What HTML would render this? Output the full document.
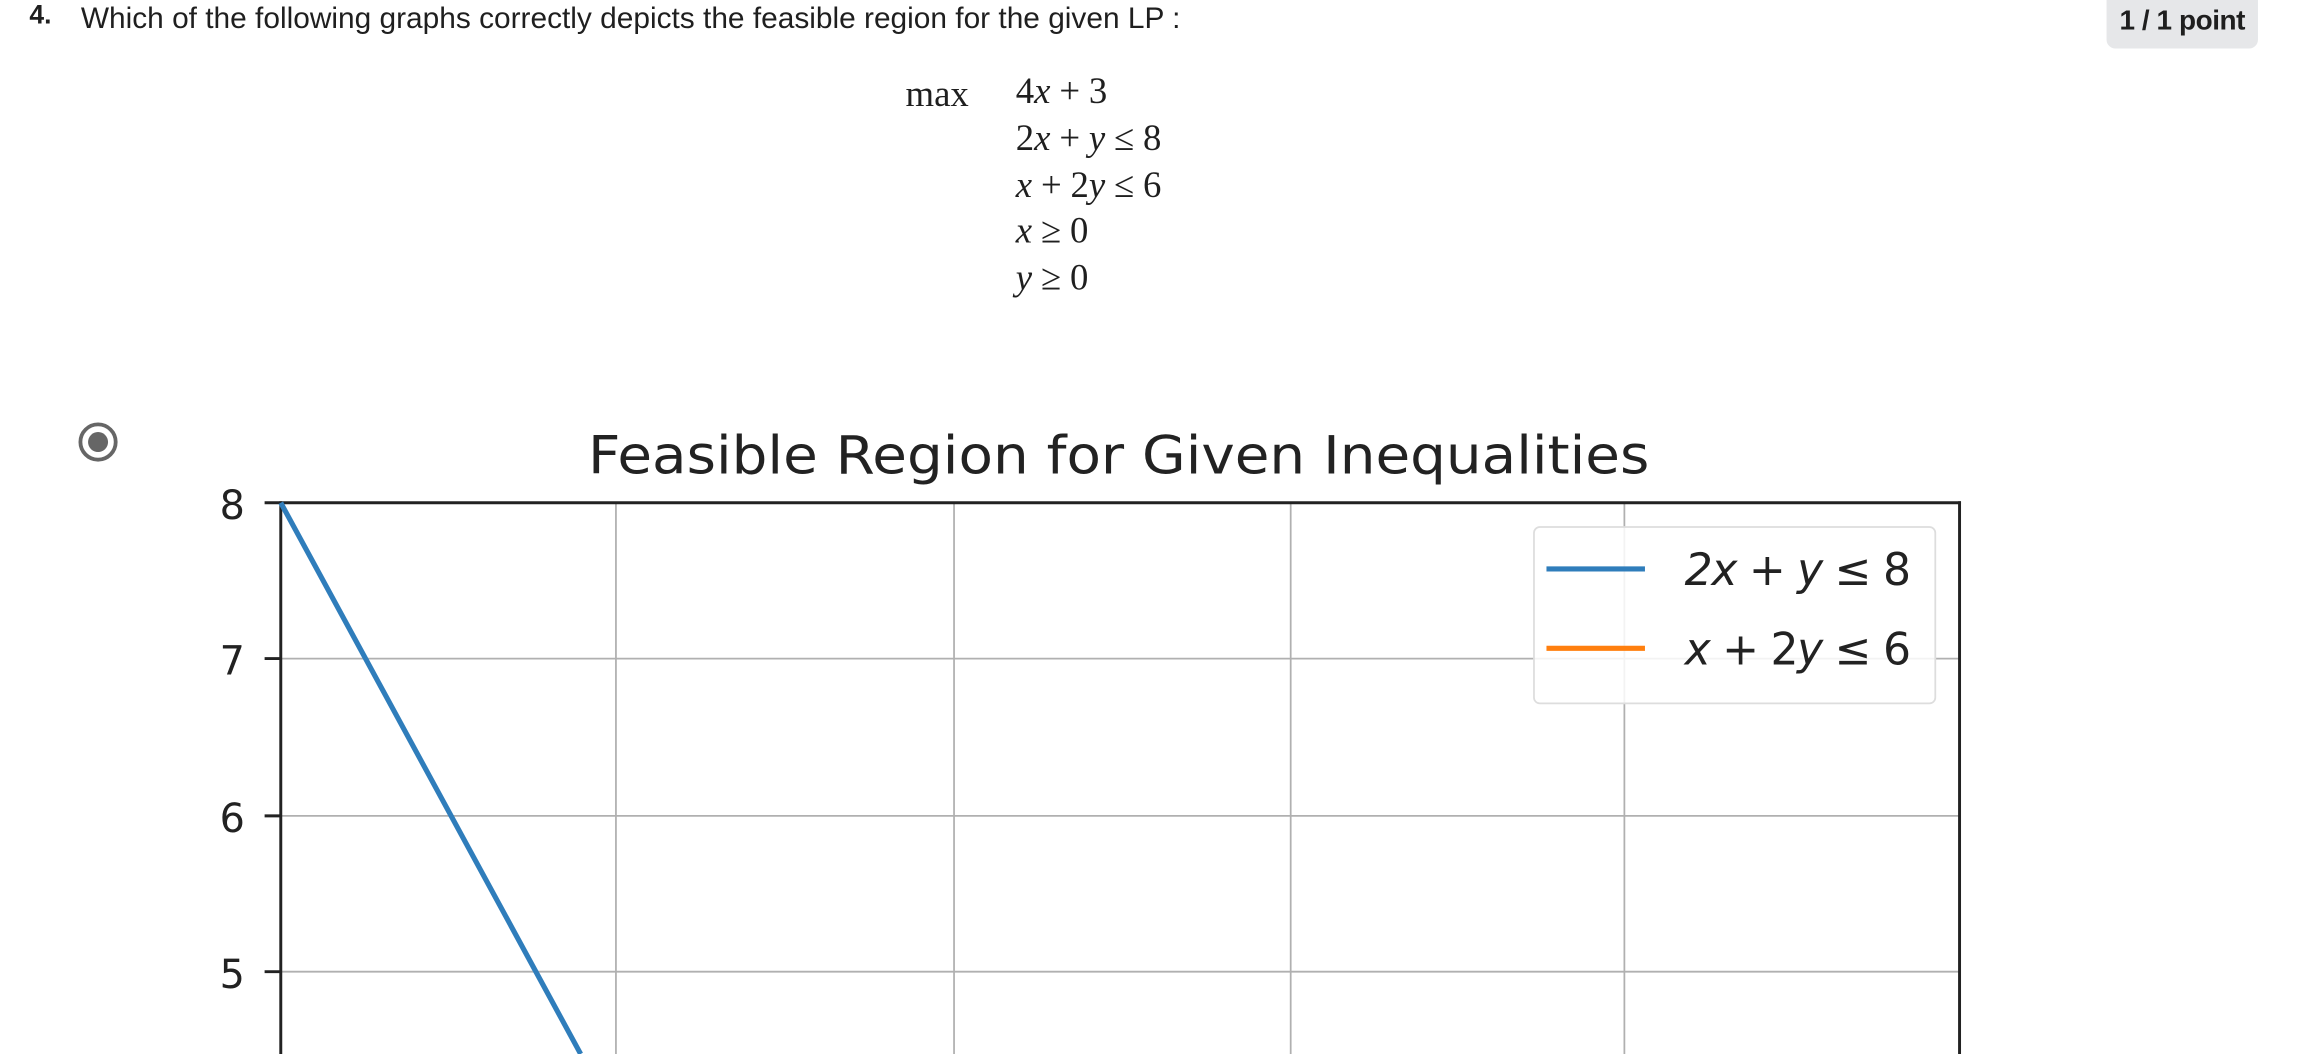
<!DOCTYPE html>
<html><head><meta charset="utf-8"><style>
html,body{margin:0;padding:0;background:#fff;overflow:hidden;width:2305px;height:1053px}
#w{position:absolute;left:0;top:0;width:1568px;height:717px;transform:scale(1.47003);transform-origin:0 0;font-family:"Liberation Sans",sans-serif;color:#1f1f1f}
.a{position:absolute;white-space:nowrap}
.m{font-family:"Liberation Serif",serif;font-size:25px;line-height:25px}
.m i{font-style:italic}
.m b{font-weight:normal;display:inline-block;margin:0 6px}
</style></head><body><div id="w">
<div class="a" style="left:20px;top:0px;font-size:18px;font-weight:bold">4.</div>
<svg class="a" style="left:0;top:0" width="900" height="30"><text x="55" y="19" font-family="Liberation Sans" font-size="20" fill="#1f1f1f" textLength="748" lengthAdjust="spacingAndGlyphs">Which of the following graphs correctly depicts the feasible region for the given LP :</text></svg>
<div class="a" style="left:1433px;top:0;width:103px;height:33px;background:#e6e7e9;border-radius:0 0 6px 6px;font-size:19px;font-weight:bold;line-height:30px;text-align:center;letter-spacing:-0.3px">1 / 1 point</div>
<div class="a m" style="left:616px;top:52px">max</div>
<div class="a m" style="left:691px;top:50px">4<i>x</i><b>+</b>3</div>
<div class="a m" style="left:691px;top:82px">2<i>x</i><b>+</b><i>y</i><b>≤</b>8</div>
<div class="a m" style="left:691px;top:114px"><i>x</i><b>+</b>2<i>y</i><b>≤</b>6</div>
<div class="a m" style="left:691px;top:145px"><i>x</i><b>≥</b>0</div>
<div class="a m" style="left:691px;top:177px"><i>y</i><b>≥</b>0</div>
<svg class="a" style="left:0;top:0" width="1568" height="717">
<circle cx="66.7" cy="300.7" r="12" fill="none" stroke="#666" stroke-width="2.6"/>
<circle cx="66.7" cy="300.7" r="6.8" fill="#666"/>
<text x="761" y="322" text-anchor="middle" font-family="DejaVu Sans" font-size="36" fill="#222" textLength="722" lengthAdjust="spacingAndGlyphs">Feasible Region for Given Inequalities</text>
<g stroke="#b0b0b0" stroke-width="1.2">
<line x1="419" y1="342" x2="419" y2="717"/><line x1="649" y1="342" x2="649" y2="717"/><line x1="878" y1="342" x2="878" y2="717"/><line x1="1105" y1="342" x2="1105" y2="717"/>
<line x1="191" y1="448" x2="1333" y2="448"/><line x1="191" y1="555" x2="1333" y2="555"/><line x1="191" y1="661" x2="1333" y2="661"/>
</g>
<g stroke="#222" stroke-width="2">
<line x1="191" y1="342" x2="1334" y2="342"/><line x1="191" y1="341" x2="191" y2="717"/><line x1="1333" y1="341" x2="1333" y2="717"/>
<line x1="180" y1="342" x2="191" y2="342"/><line x1="180" y1="448" x2="191" y2="448"/><line x1="180" y1="555" x2="191" y2="555"/><line x1="180" y1="661" x2="191" y2="661"/>
</g>
<g font-family="DejaVu Sans" font-size="27" fill="#222" text-anchor="middle">
<text x="158" y="353">8</text><text x="158" y="459">7</text><text x="158" y="566">6</text><text x="158" y="672">5</text>
</g>
<line x1="191" y1="342" x2="395" y2="717" stroke="#2f7dbb" stroke-width="3.5"/>
<rect x="1043.5" y="358.5" width="273" height="120" rx="4" fill="#fff" fill-opacity="0.85" stroke="#ddd" stroke-width="1.2"/>
<line x1="1052" y1="387" x2="1119" y2="387" stroke="#2f7dbb" stroke-width="3.5"/>
<line x1="1052" y1="441" x2="1119" y2="441" stroke="#ff7f0e" stroke-width="3.5"/>
<g font-family="DejaVu Sans" font-size="30" fill="#222">
<text x="1146" y="398" textLength="154"><tspan font-style="italic">2x</tspan> + <tspan font-style="italic">y</tspan> ≤ 8</text>
<text x="1146" y="452" textLength="154"><tspan font-style="italic">x</tspan> + 2<tspan font-style="italic">y</tspan> ≤ 6</text>
</g>
</svg>
</div></body></html>
